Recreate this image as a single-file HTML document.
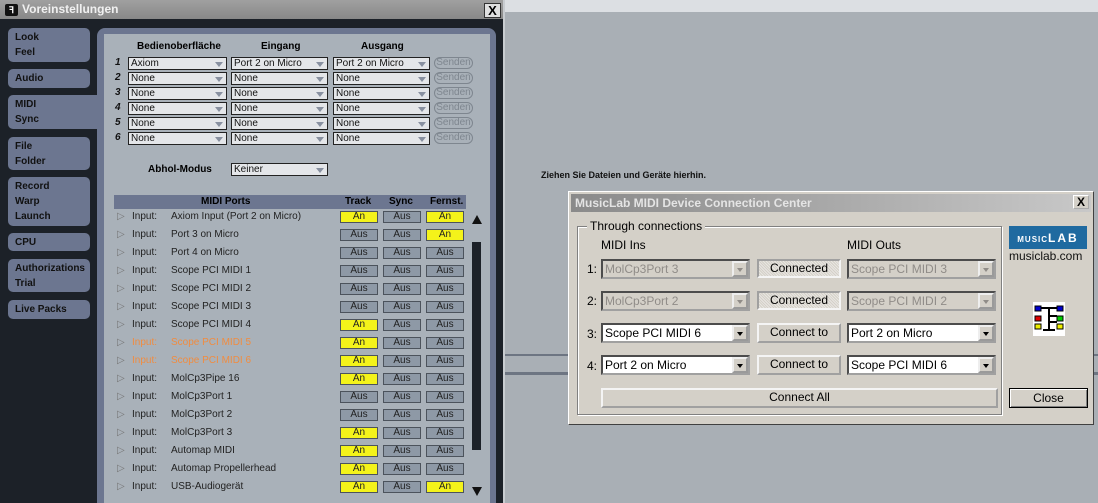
<!DOCTYPE html>
<html><head><meta charset="utf-8"><style>
*{box-sizing:border-box;margin:0;padding:0}
body{width:1098px;height:503px;overflow:hidden;position:relative;background:#a9afb5;font-family:"Liberation Sans",sans-serif}
.a{position:absolute}
.tab{position:absolute;left:8px;width:82px;background:#6c7690;border-radius:5px;color:#111;font-weight:bold;font-size:10px;line-height:15px;padding:2px 0 0 7px}
.dd{position:absolute;height:13px;background:#e4e6e9;border:1px solid #222;font-size:10px;line-height:11px;padding-left:2px;color:#111}
.dd:after{content:"";position:absolute;right:3px;top:4px;border-left:4px solid transparent;border-right:4px solid transparent;border-top:5px solid #8890a0}
.snd{position:absolute;left:434px;width:39px;height:12px;border:1px solid #7e868f;border-radius:6px;color:#7e868f;font-size:10px;line-height:10px;text-align:center}
.num{position:absolute;left:115px;font-size:10px;font-weight:bold;font-style:italic;color:#111}
.row{position:absolute;left:114px;width:230px;height:12px;font-size:10px;line-height:12px;color:#222}
.row span{position:absolute;top:0}
.b{position:absolute;width:38px;height:12px;border:1px solid #4c535c;font-size:10px;line-height:10px;text-align:center;color:#222;background:#8e99a6}
.y{background:#f4f31a}
.or{color:#f08c40}
.w{font-family:"Liberation Sans",sans-serif;font-size:12px;color:#000}
.cb{position:absolute;width:149px;height:20px;background:#fff;border:2px inset #a0a0a0;font-size:12px;line-height:16px;padding-left:2px}
.cb.g{background:#d4d0c8;color:#908c88}
.cb i{position:absolute;right:0;top:0;width:16px;height:16px;background:#d4d0c8;border:2px outset #eee}
.cb i:after{content:"";position:absolute;left:3px;top:5px;border-left:3.5px solid transparent;border-right:3.5px solid transparent;border-top:4px solid #000}
.cb.g i:after{border-top-color:#908c88}
.btn{position:absolute;background:#d4d0c8;border:2px outset #f4f4f4;font-size:12px;text-align:center;line-height:15px}
.btn.p{border-style:inset;background:repeating-linear-gradient(45deg,#d4d0c8 0 1px,#e8e6e2 1px 2px)}
</style></head><body>
<div class="a" style="left:505px;top:0;width:593px;height:12px;background:#dcdfe3"></div>
<div class="a" style="left:505px;top:354px;width:593px;height:2px;background:#6d7582"></div>
<div class="a" style="left:505px;top:372px;width:593px;height:3px;background:#6d7582"></div>
<div class="a" style="left:541px;top:170px;font-size:9px;font-weight:bold;color:#111">Ziehen Sie Dateien und Geräte hierhin.</div>

<div class="a" style="left:0;top:0;width:505px;height:503px;background:#1c2128;border-right:2px solid #c8ccd0"></div>
<div class="a" style="left:0;top:0;width:503px;height:19px;background:linear-gradient(#a0a0a0,#888);color:#f0f0f0;font-weight:bold;font-size:12px;line-height:19px;padding-left:22px">Voreinstellungen</div>
<div class="a" style="left:5px;top:4px;width:13px;height:12px;background:#111;border-radius:2px;color:#fff;font-size:9px;line-height:12px;text-align:center;font-weight:bold">ꟻ</div>
<div class="a" style="left:484px;top:3px;width:17px;height:15px;background:#e0e0e0;border:1px solid #333;font-size:13px;line-height:13px;text-align:center;font-weight:bold">X</div>

<div class="tab" style="top:28px;height:34px">Look<br>Feel</div>
<div class="tab" style="top:69px;height:19px">Audio</div>
<div class="tab" style="top:95px;height:34px;width:92px;border-radius:5px 0 0 5px">MIDI<br>Sync</div>
<div class="tab" style="top:137px;height:33px">File<br>Folder</div>
<div class="tab" style="top:177px;height:49px">Record<br>Warp<br>Launch</div>
<div class="tab" style="top:233px;height:18px">CPU</div>
<div class="tab" style="top:259px;height:33px">Authorizations<br>Trial</div>
<div class="tab" style="top:300px;height:19px">Live Packs</div>

<div class="a" style="left:97px;top:28px;width:399px;height:475px;background:#6c7690;border-radius:8px 8px 0 0"></div>
<div class="a" style="left:104px;top:34px;width:386px;height:469px;background:#a9b1b9"></div>

<div class="a" style="left:137px;top:41px;font-size:10px;font-weight:bold">Bedienoberfläche</div>
<div class="a" style="left:261px;top:41px;font-size:10px;font-weight:bold">Eingang</div>
<div class="a" style="left:361px;top:41px;font-size:10px;font-weight:bold">Ausgang</div>

<div class="num" style="top:57px">1</div><div class="dd" style="left:128px;top:57px;width:99px">Axiom</div><div class="dd" style="left:231px;top:57px;width:97px">Port 2 on Micro</div><div class="dd" style="left:333px;top:57px;width:97px">Port 2 on Micro</div><div class="snd" style="top:57px">Senden</div>
<div class="num" style="top:72px">2</div><div class="dd" style="left:128px;top:72px;width:99px">None</div><div class="dd" style="left:231px;top:72px;width:97px">None</div><div class="dd" style="left:333px;top:72px;width:97px">None</div><div class="snd" style="top:72px">Senden</div>
<div class="num" style="top:87px">3</div><div class="dd" style="left:128px;top:87px;width:99px">None</div><div class="dd" style="left:231px;top:87px;width:97px">None</div><div class="dd" style="left:333px;top:87px;width:97px">None</div><div class="snd" style="top:87px">Senden</div>
<div class="num" style="top:102px">4</div><div class="dd" style="left:128px;top:102px;width:99px">None</div><div class="dd" style="left:231px;top:102px;width:97px">None</div><div class="dd" style="left:333px;top:102px;width:97px">None</div><div class="snd" style="top:102px">Senden</div>
<div class="num" style="top:117px">5</div><div class="dd" style="left:128px;top:117px;width:99px">None</div><div class="dd" style="left:231px;top:117px;width:97px">None</div><div class="dd" style="left:333px;top:117px;width:97px">None</div><div class="snd" style="top:117px">Senden</div>
<div class="num" style="top:132px">6</div><div class="dd" style="left:128px;top:132px;width:99px">None</div><div class="dd" style="left:231px;top:132px;width:97px">None</div><div class="dd" style="left:333px;top:132px;width:97px">None</div><div class="snd" style="top:132px">Senden</div>

<div class="a" style="left:148px;top:164px;font-size:10px;font-weight:bold">Abhol-Modus</div>
<div class="dd" style="left:231px;top:163px;width:97px">Keiner</div>

<div class="a" style="left:114px;top:195px;width:352px;height:14px;background:#6c7690;font-size:10px;font-weight:bold;line-height:14px">
<span class="a" style="left:87px">MIDI Ports</span><span class="a" style="left:231px">Track</span><span class="a" style="left:275px">Sync</span><span class="a" style="left:316px">Fernst.</span></div>

<div class="a" style="left:472px;top:215px;border-left:5px solid transparent;border-right:5px solid transparent;border-bottom:9px solid #111"></div>
<div class="a" style="left:472px;top:242px;width:9px;height:208px;background:#1c2128"></div>
<div class="a" style="left:472px;top:487px;border-left:5px solid transparent;border-right:5px solid transparent;border-top:9px solid #111"></div>

<div class="row" style="top:211px"><span style="left:3px;color:#777">▷</span><span style="left:18px">Input:</span><span style="left:57px">Axiom Input (Port 2 on Micro)</span></div><div class="b y" style="left:340px;top:211px">An</div><div class="b" style="left:383px;top:211px">Aus</div><div class="b y" style="left:426px;top:211px">An</div>
<div class="row" style="top:229px"><span style="left:3px;color:#777">▷</span><span style="left:18px">Input:</span><span style="left:57px">Port 3 on Micro</span></div><div class="b" style="left:340px;top:229px">Aus</div><div class="b" style="left:383px;top:229px">Aus</div><div class="b y" style="left:426px;top:229px">An</div>
<div class="row" style="top:247px"><span style="left:3px;color:#777">▷</span><span style="left:18px">Input:</span><span style="left:57px">Port 4 on Micro</span></div><div class="b" style="left:340px;top:247px">Aus</div><div class="b" style="left:383px;top:247px">Aus</div><div class="b" style="left:426px;top:247px">Aus</div>
<div class="row" style="top:265px"><span style="left:3px;color:#777">▷</span><span style="left:18px">Input:</span><span style="left:57px">Scope PCI MIDI 1</span></div><div class="b" style="left:340px;top:265px">Aus</div><div class="b" style="left:383px;top:265px">Aus</div><div class="b" style="left:426px;top:265px">Aus</div>
<div class="row" style="top:283px"><span style="left:3px;color:#777">▷</span><span style="left:18px">Input:</span><span style="left:57px">Scope PCI MIDI 2</span></div><div class="b" style="left:340px;top:283px">Aus</div><div class="b" style="left:383px;top:283px">Aus</div><div class="b" style="left:426px;top:283px">Aus</div>
<div class="row" style="top:301px"><span style="left:3px;color:#777">▷</span><span style="left:18px">Input:</span><span style="left:57px">Scope PCI MIDI 3</span></div><div class="b" style="left:340px;top:301px">Aus</div><div class="b" style="left:383px;top:301px">Aus</div><div class="b" style="left:426px;top:301px">Aus</div>
<div class="row" style="top:319px"><span style="left:3px;color:#777">▷</span><span style="left:18px">Input:</span><span style="left:57px">Scope PCI MIDI 4</span></div><div class="b y" style="left:340px;top:319px">An</div><div class="b" style="left:383px;top:319px">Aus</div><div class="b" style="left:426px;top:319px">Aus</div>
<div class="row or" style="top:337px"><span style="left:3px;color:#777">▷</span><span style="left:18px">Input:</span><span style="left:57px">Scope PCI MIDI 5</span></div><div class="b y" style="left:340px;top:337px">An</div><div class="b" style="left:383px;top:337px">Aus</div><div class="b" style="left:426px;top:337px">Aus</div>
<div class="row or" style="top:355px"><span style="left:3px;color:#777">▷</span><span style="left:18px">Input:</span><span style="left:57px">Scope PCI MIDI 6</span></div><div class="b y" style="left:340px;top:355px">An</div><div class="b" style="left:383px;top:355px">Aus</div><div class="b" style="left:426px;top:355px">Aus</div>
<div class="row" style="top:373px"><span style="left:3px;color:#777">▷</span><span style="left:18px">Input:</span><span style="left:57px">MolCp3Pipe 16</span></div><div class="b y" style="left:340px;top:373px">An</div><div class="b" style="left:383px;top:373px">Aus</div><div class="b" style="left:426px;top:373px">Aus</div>
<div class="row" style="top:391px"><span style="left:3px;color:#777">▷</span><span style="left:18px">Input:</span><span style="left:57px">MolCp3Port 1</span></div><div class="b" style="left:340px;top:391px">Aus</div><div class="b" style="left:383px;top:391px">Aus</div><div class="b" style="left:426px;top:391px">Aus</div>
<div class="row" style="top:409px"><span style="left:3px;color:#777">▷</span><span style="left:18px">Input:</span><span style="left:57px">MolCp3Port 2</span></div><div class="b" style="left:340px;top:409px">Aus</div><div class="b" style="left:383px;top:409px">Aus</div><div class="b" style="left:426px;top:409px">Aus</div>
<div class="row" style="top:427px"><span style="left:3px;color:#777">▷</span><span style="left:18px">Input:</span><span style="left:57px">MolCp3Port 3</span></div><div class="b y" style="left:340px;top:427px">An</div><div class="b" style="left:383px;top:427px">Aus</div><div class="b" style="left:426px;top:427px">Aus</div>
<div class="row" style="top:445px"><span style="left:3px;color:#777">▷</span><span style="left:18px">Input:</span><span style="left:57px">Automap MIDI</span></div><div class="b y" style="left:340px;top:445px">An</div><div class="b" style="left:383px;top:445px">Aus</div><div class="b" style="left:426px;top:445px">Aus</div>
<div class="row" style="top:463px"><span style="left:3px;color:#777">▷</span><span style="left:18px">Input:</span><span style="left:57px">Automap Propellerhead</span></div><div class="b y" style="left:340px;top:463px">An</div><div class="b" style="left:383px;top:463px">Aus</div><div class="b" style="left:426px;top:463px">Aus</div>
<div class="row" style="top:481px"><span style="left:3px;color:#777">▷</span><span style="left:18px">Input:</span><span style="left:57px">USB-Audiogerät</span></div><div class="b y" style="left:340px;top:481px">An</div><div class="b" style="left:383px;top:481px">Aus</div><div class="b y" style="left:426px;top:481px">An</div>

<div class="a" style="left:568px;top:191px;width:526px;height:234px;background:#d4d0c8;border:1px solid #fff;border-right-color:#404040;border-bottom-color:#404040"></div>
<div class="a" style="left:571px;top:194px;width:520px;height:18px;background:linear-gradient(90deg,#8a8a8a,#c8c8c8);color:#e4e4e4;font-weight:bold;font-size:12px;line-height:18px;padding-left:4px">MusicLab MIDI Device Connection Center</div>
<div class="a" style="left:1073px;top:195px;width:16px;height:14px;background:#d4d0c8;border:1px outset #fff;font-size:12px;line-height:12px;text-align:center;font-weight:bold">X</div>
<div class="a" style="left:577px;top:226px;width:425px;height:189px;border:1px solid #808080;box-shadow:1px 1px 0 #fff,inset 1px 1px 0 #fff"></div>
<div class="a w" style="left:587px;top:219px;background:#d4d0c8;padding:0 3px">Through connections</div>
<div class="a w" style="left:601px;top:238px">MIDI Ins</div>
<div class="a w" style="left:847px;top:238px">MIDI Outs</div>

<div class="a w" style="left:587px;top:262px">1:</div>
<div class="cb g" style="left:601px;top:259px">MolCp3Port 3<i></i></div>
<div class="btn p" style="left:757px;top:259px;width:84px;height:19px">Connected</div>
<div class="cb g" style="left:847px;top:259px">Scope PCI MIDI 3<i></i></div>
<div class="a w" style="left:587px;top:294px">2:</div>
<div class="cb g" style="left:601px;top:291px">MolCp3Port 2<i></i></div>
<div class="btn p" style="left:757px;top:291px;width:84px;height:19px">Connected</div>
<div class="cb g" style="left:847px;top:291px">Scope PCI MIDI 2<i></i></div>
<div class="a w" style="left:587px;top:327px">3:</div>
<div class="cb" style="left:601px;top:323px">Scope PCI MIDI 6<i></i></div>
<div class="btn" style="left:757px;top:323px;width:84px;height:20px">Connect to</div>
<div class="cb" style="left:847px;top:323px">Port 2 on Micro<i></i></div>
<div class="a w" style="left:587px;top:359px">4:</div>
<div class="cb" style="left:601px;top:355px">Port 2 on Micro<i></i></div>
<div class="btn" style="left:757px;top:355px;width:84px;height:20px">Connect to</div>
<div class="cb" style="left:847px;top:355px">Scope PCI MIDI 6<i></i></div>
<div class="btn" style="left:601px;top:388px;width:397px;height:20px">Connect All</div>
<div class="btn" style="left:1009px;top:388px;width:79px;height:20px;border:1px solid #000;box-shadow:inset 1px 1px 0 #fff,inset -1px -1px 0 #808080;line-height:18px">Close</div>

<div class="a" style="left:1009px;top:226px;width:78px;height:23px;background:#1f6aa0;color:#fff;font-weight:bold;text-align:center;line-height:23px"><span style="font-size:8px;letter-spacing:1px">MUSIC</span><span style="font-size:12px;letter-spacing:2px">LAB</span></div>
<div class="a" style="left:1009px;top:249px;font-size:12px;color:#111">musiclab.com</div>
<svg class="a" style="left:1033px;top:302px" width="32" height="34" viewBox="0 0 32 34">
<rect x="0" y="0" width="32" height="34" fill="#fff"/>
<path d="M6 6H26M16 6V28M16 14H24M16 20H24M10 28H22" stroke="#000" stroke-width="2" fill="none"/>
<rect x="2" y="4" width="6" height="5" fill="#00c" stroke="#000"/><rect x="24" y="4" width="6" height="5" fill="#00c" stroke="#000"/>
<rect x="2" y="14" width="6" height="5" fill="#d00" stroke="#000"/><rect x="24" y="14" width="6" height="5" fill="#0c0" stroke="#000"/>
<rect x="2" y="22" width="6" height="5" fill="#ee0" stroke="#000"/><rect x="24" y="22" width="6" height="5" fill="#ee0" stroke="#000"/>
</svg>
</body></html>
